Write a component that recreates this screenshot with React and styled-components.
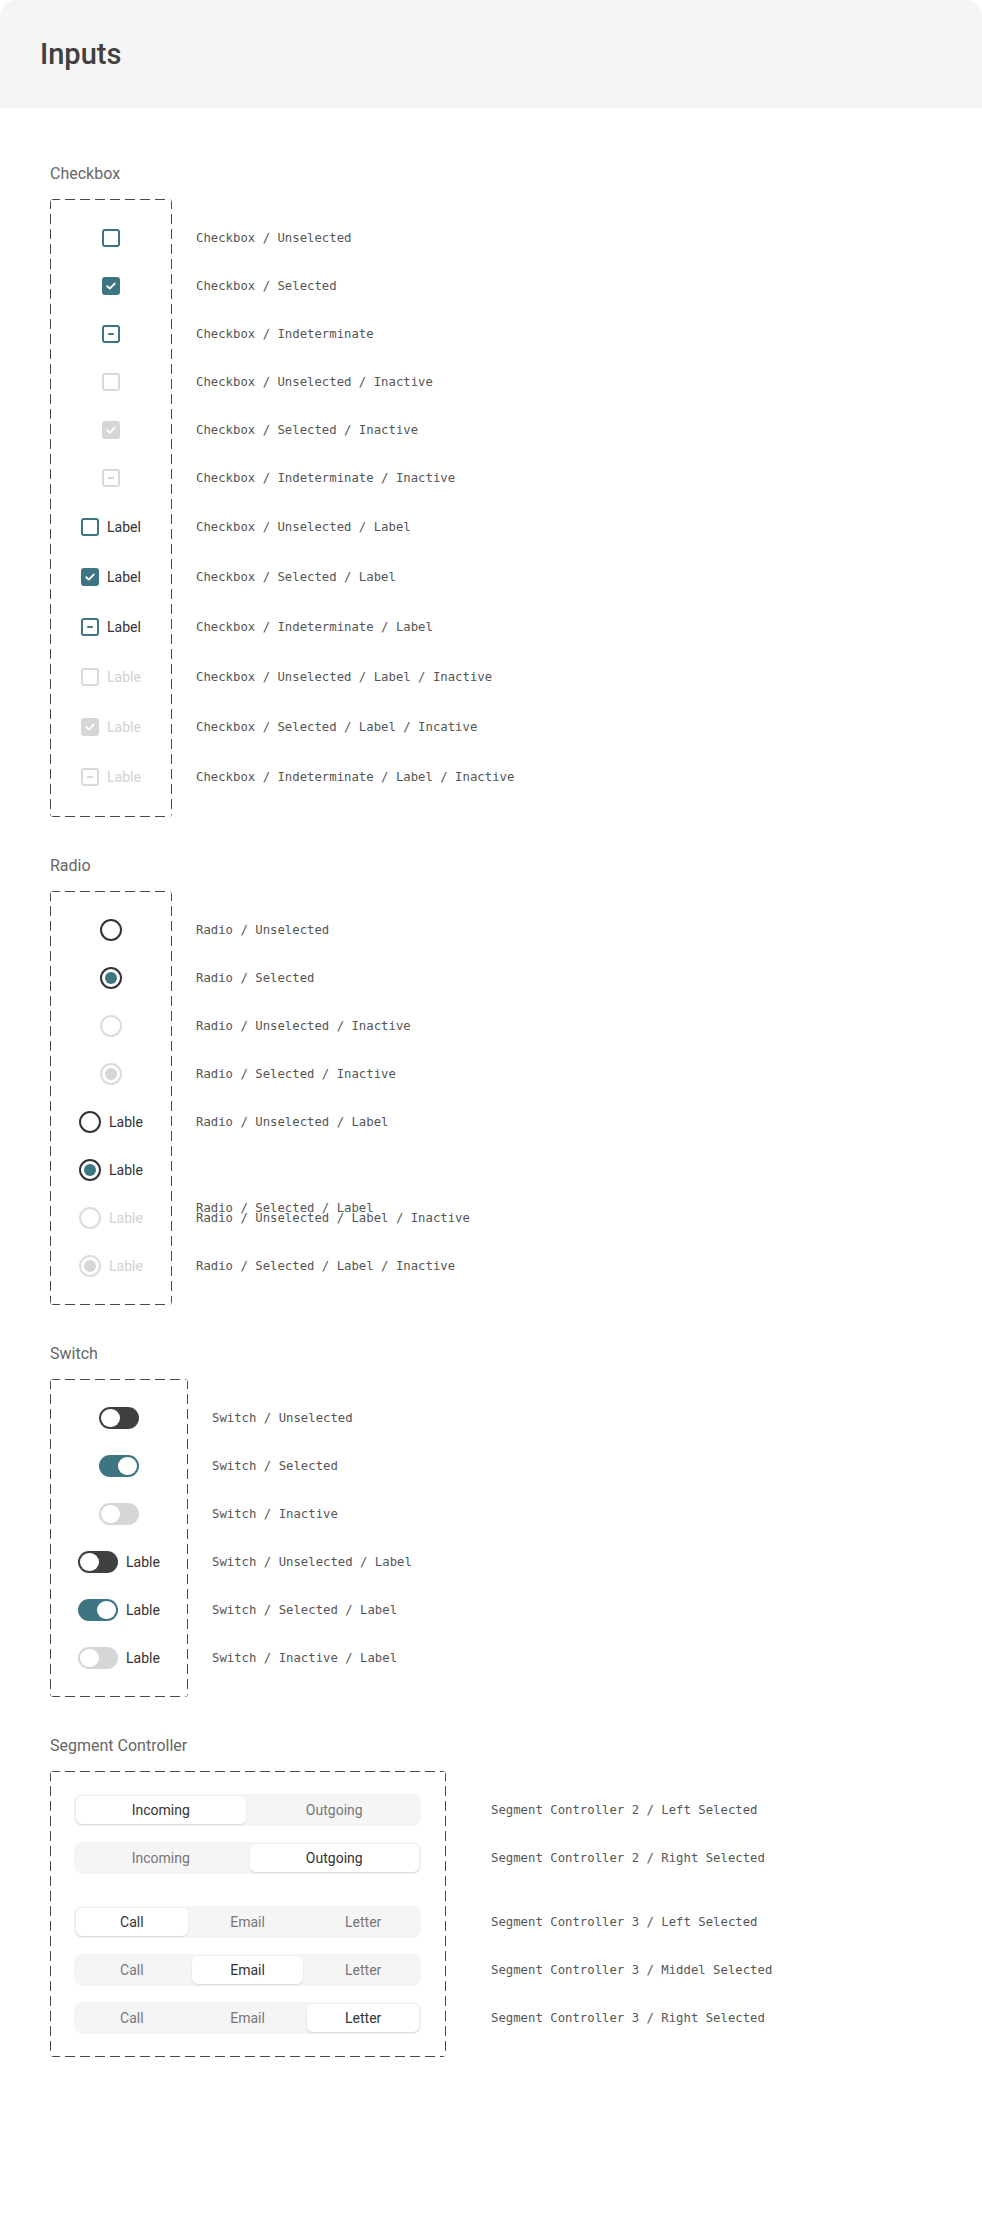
import React from "react";
import styled, { createGlobalStyle, css } from "styled-components";

const TEAL = "#3d7582";
const DARK = "#404040";
const MUTED = "#d6d6d6";

const GlobalStyle = createGlobalStyle`
  html, body {
    margin: 0;
    padding: 0;
    background: #ffffff;
  }
  body {
    font-family: Roboto, "Noto Sans", sans-serif;
    color: #333;
  }
`;

const Page = styled.div`
  width: 982px;
  min-height: 2228px;
  background: #fff;
`;

const Header = styled.header`
  height: 108px;
  background: #f5f5f5;
  border-radius: 16px 16px 0 0;
  display: flex;
  align-items: center;
  padding-left: 40px;
`;

const Title = styled.h1`
  margin: 0;
  font-size: 29px;
  font-weight: 500;
  color: ${DARK};
`;

const Main = styled.main`
  padding: 56px 0 0 50px;
  display: flex;
  flex-direction: column;
  gap: 39px;
`;

const Section = styled.section`
  display: flex;
  flex-direction: column;
`;

const SectionTitle = styled.div`
  font-size: 16px;
  line-height: 20px;
  color: #666;
  margin-bottom: 15px;
`;

const Body = styled.div`
  display: flex;
  gap: ${({ $gap }) => $gap}px;
`;

const dash = "#4a4a4a";

const Frame = styled.div`
  width: ${({ $w }) => $w}px;
  box-sizing: border-box;
  padding: ${({ $pad }) => $pad || "15px 0"};
  display: flex;
  flex-direction: column;
  gap: ${({ $gap }) => $gap || 0}px;
  border-radius: 4px;
  background:
    repeating-linear-gradient(90deg, ${dash} 0 10px, transparent 10px 15px) top left / 100% 1px no-repeat,
    repeating-linear-gradient(90deg, ${dash} 0 10px, transparent 10px 15px) bottom left / 100% 1px no-repeat,
    repeating-linear-gradient(180deg, ${dash} 0 10px, transparent 10px 15px) top left / 1px 100% no-repeat,
    repeating-linear-gradient(180deg, ${dash} 0 10px, transparent 10px 15px) top right / 1px 100% no-repeat;
`;

const DescColumn = styled.div`
  display: flex;
  flex-direction: column;
  padding: ${({ $pad }) => $pad || "15px 0"};
  gap: ${({ $gap }) => $gap || 0}px;
`;

const Row = styled.div`
  height: ${({ $h }) => $h || 48}px;
  display: flex;
  align-items: center;
  justify-content: center;
  gap: 8px;
`;

const Desc = styled.div`
  height: ${({ $h }) => $h || 48}px;
  display: flex;
  align-items: center;
  font-family: "DejaVu Sans Mono", "Liberation Mono", monospace;
  font-size: 12.3px;
  color: #555;
  white-space: pre;
`;

const DescText = styled.span`
  ${({ $shift }) =>
    $shift &&
    css`
      position: relative;
      top: ${$shift}px;
    `}
`;

const Label = styled.span`
  font-size: 14px;
  line-height: 20px;
  color: ${({ $dim }) => ($dim ? "#d2d2d2" : "#333")};
`;

/* checkbox */

const CheckBox = styled.span`
  width: 18px;
  height: 18px;
  box-sizing: border-box;
  border-radius: 3px;
  border: 2px solid ${({ $dim }) => ($dim ? "#dadada" : TEAL)};
  background: ${({ $on, $dim }) => ($on ? ($dim ? MUTED : TEAL) : "#fff")};
  ${({ $on, $dim }) => $on && $dim && css`border-color: ${MUTED};`}
  display: flex;
  align-items: center;
  justify-content: center;
  flex-shrink: 0;
`;

const Bar = styled.span`
  width: 6px;
  height: 2px;
  border-radius: 1px;
  background: ${({ $dim }) => ($dim ? "#d6d6d6" : TEAL)};
`;

const Checkbox = ({ state, dim }) => (
  <CheckBox $on={state === "on"} $dim={dim}>
    {state === "on" && (
      <svg width="12" height="12" viewBox="0 0 12 12">
        <path d="M2.3 6.2 L4.8 8.6 L9.7 3.6" fill="none" stroke="#fff" strokeWidth="1.9" strokeLinecap="round" strokeLinejoin="round" />
      </svg>
    )}
    {state === "mixed" && <Bar $dim={dim} />}
  </CheckBox>
);

/* radio */

const RadioRing = styled.span`
  width: 22px;
  height: 22px;
  box-sizing: border-box;
  border-radius: 50%;
  border: 2px solid ${({ $dim }) => ($dim ? "#dcdcdc" : "#333")};
  display: flex;
  align-items: center;
  justify-content: center;
  flex-shrink: 0;
`;

const RadioDot = styled.span`
  width: 12px;
  height: 12px;
  border-radius: 50%;
  background: ${({ $dim }) => ($dim ? MUTED : TEAL)};
`;

const Radio = ({ on, dim }) => (
  <RadioRing $dim={dim}>{on && <RadioDot $dim={dim} />}</RadioRing>
);

/* switch */

const trackColor = { off: DARK, on: TEAL, dim: MUTED };

const Track = styled.span`
  width: 40px;
  height: 22px;
  box-sizing: border-box;
  padding: 2px;
  border-radius: 11px;
  background: ${({ $state }) => trackColor[$state]};
  display: flex;
  justify-content: ${({ $state }) => ($state === "on" ? "flex-end" : "flex-start")};
  flex-shrink: 0;
`;

const Knob = styled.span`
  width: 19px;
  height: 18px;
  border-radius: 9px;
  background: #fff;
`;

const Switch = ({ state }) => (
  <Track $state={state}>
    <Knob />
  </Track>
);

/* segment controller */

const Segment = styled.div`
  width: 347px;
  height: 32px;
  box-sizing: border-box;
  padding: 2px;
  gap: 4px;
  border-radius: 8px;
  background: #f5f5f6;
  display: flex;
`;

const SegItem = styled.div`
  flex: 1;
  border-radius: 6px;
  display: flex;
  align-items: center;
  justify-content: center;
  font-size: 14px;
  color: ${({ $active }) => ($active ? "#333" : "#777")};
  background: ${({ $active }) => ($active ? "#fff" : "transparent")};
  box-shadow: ${({ $active }) =>
    $active ? "0 1px 2px rgba(70, 70, 140, 0.18)" : "none"};
`;

const SegmentControl = ({ items, active }) => (
  <Segment>
    {items.map((it, i) => (
      <SegItem key={it} $active={i === active}>
        {it}
      </SegItem>
    ))}
  </Segment>
);

const Spacer = styled.div`
  height: ${({ $h }) => $h}px;
`;

/* data */

const checkRows = [
  { state: "off", desc: "Checkbox / Unselected" },
  { state: "on", desc: "Checkbox / Selected" },
  { state: "mixed", desc: "Checkbox / Indeterminate" },
  { state: "off", dim: true, desc: "Checkbox / Unselected / Inactive" },
  { state: "on", dim: true, desc: "Checkbox / Selected / Inactive" },
  { state: "mixed", dim: true, desc: "Checkbox / Indeterminate / Inactive" },
  { state: "off", label: "Label", desc: "Checkbox / Unselected / Label" },
  { state: "on", label: "Label", desc: "Checkbox / Selected / Label" },
  { state: "mixed", label: "Label", desc: "Checkbox / Indeterminate / Label" },
  { state: "off", dim: true, label: "Lable", desc: "Checkbox / Unselected / Label / Inactive" },
  { state: "on", dim: true, label: "Lable", desc: "Checkbox / Selected / Label / Incative" },
  { state: "mixed", dim: true, label: "Lable", desc: "Checkbox / Indeterminate / Label / Inactive" },
];

const radioRows = [
  { on: false, desc: "Radio / Unselected" },
  { on: true, desc: "Radio / Selected" },
  { on: false, dim: true, desc: "Radio / Unselected / Inactive" },
  { on: true, dim: true, desc: "Radio / Selected / Inactive" },
  { on: false, label: "Lable", desc: "Radio / Unselected / Label" },
  { on: true, label: "Lable", desc: "Radio / Selected / Label", shift: 38 },
  { on: false, dim: true, label: "Lable", desc: "Radio / Unselected / Label / Inactive" },
  { on: true, dim: true, label: "Lable", desc: "Radio / Selected / Label / Inactive" },
];

const switchRows = [
  { state: "off", desc: "Switch / Unselected" },
  { state: "on", desc: "Switch / Selected" },
  { state: "dim", desc: "Switch / Inactive" },
  { state: "off", label: "Lable", desc: "Switch / Unselected / Label" },
  { state: "on", label: "Lable", desc: "Switch / Selected / Label" },
  { state: "dim", label: "Lable", desc: "Switch / Inactive / Label" },
];

const two = ["Incoming", "Outgoing"];
const three = ["Call", "Email", "Letter"];

const segRows = [
  { items: two, active: 0, desc: "Segment Controller 2 / Left Selected" },
  { items: two, active: 1, desc: "Segment Controller 2 / Right Selected" },
  { gap: true },
  { items: three, active: 0, desc: "Segment Controller 3 / Left Selected" },
  { items: three, active: 1, desc: "Segment Controller 3 / Middel Selected" },
  { items: three, active: 2, desc: "Segment Controller 3 / Right Selected" },
];

export default function App() {
  return (
    <Page>
      <GlobalStyle />
      <Header>
        <Title>Inputs</Title>
      </Header>
      <Main>
        <Section>
          <SectionTitle>Checkbox</SectionTitle>
          <Body $gap={24}>
            <Frame $w={122}>
              {checkRows.map((r, i) => (
                <Row key={i} $h={i < 6 ? 48 : 50}>
                  <Checkbox state={r.state} dim={r.dim} />
                  {r.label && <Label $dim={r.dim}>{r.label}</Label>}
                </Row>
              ))}
            </Frame>
            <DescColumn>
              {checkRows.map((r, i) => (
                <Desc key={i} $h={i < 6 ? 48 : 50}>
                  {r.desc}
                </Desc>
              ))}
            </DescColumn>
          </Body>
        </Section>

        <Section>
          <SectionTitle>Radio</SectionTitle>
          <Body $gap={24}>
            <Frame $w={122}>
              {radioRows.map((r, i) => (
                <Row key={i}>
                  <Radio on={r.on} dim={r.dim} />
                  {r.label && <Label $dim={r.dim}>{r.label}</Label>}
                </Row>
              ))}
            </Frame>
            <DescColumn>
              {radioRows.map((r, i) => (
                <Desc key={i}>
                  <DescText $shift={r.shift}>{r.desc}</DescText>
                </Desc>
              ))}
            </DescColumn>
          </Body>
        </Section>

        <Section>
          <SectionTitle>Switch</SectionTitle>
          <Body $gap={24}>
            <Frame $w={138}>
              {switchRows.map((r, i) => (
                <Row key={i}>
                  <Switch state={r.state} />
                  {r.label && <Label>{r.label}</Label>}
                </Row>
              ))}
            </Frame>
            <DescColumn>
              {switchRows.map((r, i) => (
                <Desc key={i}>{r.desc}</Desc>
              ))}
            </DescColumn>
          </Body>
        </Section>

        <Section>
          <SectionTitle>Segment Controller</SectionTitle>
          <Body $gap={45}>
            <Frame $w={396} $pad="23px 25px 23px 24px" $gap={16}>
              {segRows.map((r, i) =>
                r.gap ? (
                  <Spacer key={i} $h={0} />
                ) : (
                  <SegmentControl key={i} items={r.items} active={r.active} />
                )
              )}
            </Frame>
            <DescColumn $pad="23px 0" $gap={16}>
              {segRows.map((r, i) =>
                r.gap ? (
                  <Spacer key={i} $h={0} />
                ) : (
                  <Desc key={i} $h={32}>
                    {r.desc}
                  </Desc>
                )
              )}
            </DescColumn>
          </Body>
        </Section>
      </Main>
    </Page>
  );
}
